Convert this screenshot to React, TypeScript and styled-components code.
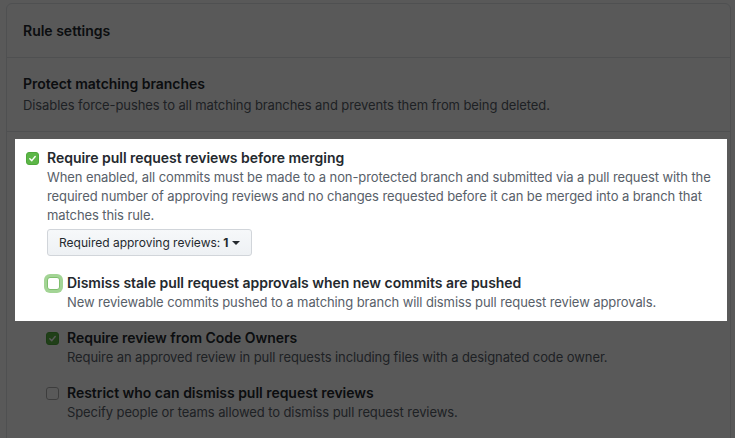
import React from "react";
import styled, { createGlobalStyle } from "styled-components";

const Global = createGlobalStyle`
  html, body { margin: 0; padding: 0; background: #fff; }
  body {
    font-family: Inter, "Noto Sans", "Liberation Sans", sans-serif;
    color: #24292e;
    -webkit-font-smoothing: antialiased;
  }
`;

const Page = styled.div`
  padding: 3px 4px 0 6px;
  height: 438px;
  box-sizing: border-box;
  overflow: hidden;
`;

const Box = styled.div`
  border: 1px solid #e1e4e8;
  border-radius: 6px 6px 0 0;
  min-height: 600px;
`;

const BoxHeader = styled.div`
  padding: 16px 16px;
  border-bottom: 1px solid #e1e4e8;
  font-size: 14px;
  line-height: 21px;
  font-weight: 600;
`;

const Section = styled.div<{ $bordered?: boolean }>`
  padding: 16px 16px;
  border-bottom: ${(p) => (p.$bordered ? "1px solid #e1e4e8" : "none")};
`;

const Title = styled.div`
  font-size: 14px;
  line-height: 20px;
  font-weight: 600;
  color: #24292e;
  white-space: nowrap;
  letter-spacing: -0.03px;
`;

const Note = styled.div`
  font-size: 13px;
  line-height: 19px;
  color: #586069;
  white-space: nowrap;
  letter-spacing: -0.09px;
`;

const NoteSpaced = styled(Note)`
  margin-top: 2px;
`;

const RulesArea = styled.div`
  padding: 7px 3px 0 8px;
`;

const Spotlight = styled.div`
  position: relative;
  z-index: 2;
  background: #fff;
  padding: 9px 11px 9px 11px;
`;

const Option = styled.div<{ $indent?: number; $top?: number }>`
  display: flex;
  align-items: flex-start;
  margin-left: ${(p) => p.$indent ?? 0}px;
  margin-top: ${(p) => p.$top ?? 0}px;
`;

const OptionBody = styled.div`
  display: flex;
  flex-direction: column;
  align-items: flex-start;
`;

const Check = styled.span<{ $checked?: boolean; $focus?: boolean }>`
  flex: none;
  box-sizing: border-box;
  width: 13px;
  height: 13px;
  margin: 4px ${(p) => (p.$focus ? 7 : 8)}px 0 0;
  border-radius: 3px;
  display: flex;
  align-items: center;
  justify-content: center;
  background: ${(p) => (p.$checked ? "#5cb647" : "#fff")};
  border: 1px solid ${(p) => (p.$checked ? "#4fa83b" : p.$focus ? "#7fbf6e" : "#b0b0b0")};
  box-shadow: ${(p) => (p.$focus ? "0 0 0 3px #a3d495" : "none")};
`;

const DropButton = styled.button`
  margin-top: 4px;
  height: 27px;
  box-sizing: border-box;
  padding: 0 11px 0 11px;
  display: inline-flex;
  align-items: center;
  font-family: inherit;
  font-size: 12px;
  color: #24292e;
  background: linear-gradient(#f6f8fa, #eef1f4);
  border: 1px solid #d1d5da;
  border-radius: 3px;
  cursor: pointer;
`;

const Strong = styled.b`
  font-weight: 700;
  margin-left: 3px;
`;

const Caret = styled.span`
  display: inline-block;
  margin-left: 4px;
  width: 0;
  height: 0;
  border-left: 4px solid transparent;
  border-right: 4px solid transparent;
  border-top: 4px solid #24292e;
`;

const Dim = styled.div`
  position: fixed;
  inset: 0;
  background: rgba(0, 0, 0, 0.65);
  z-index: 1;
  pointer-events: none;
`;

const Tick = () => (
  <svg width="9" height="9" viewBox="0 0 10 10" aria-hidden="true">
    <path d="M2 5.3 L4.2 7.4 L8 2.8" fill="none" stroke="#fff" strokeWidth="1.6" strokeLinecap="round" strokeLinejoin="round" />
  </svg>
);

export default function App() {
  return (
    <>
      <Global />
      <Page>
        <Box>
          <BoxHeader>Rule settings</BoxHeader>
          <Section $bordered>
            <Title>Protect matching branches</Title>
            <NoteSpaced>Disables force-pushes to all matching branches and prevents them from being deleted.</NoteSpaced>
          </Section>
          <RulesArea>
            <Spotlight>
              <Option>
                <Check $checked>
                  <Tick />
                </Check>
                <OptionBody>
                  <Title>Require pull request reviews before merging</Title>
                  <Note>
                    When enabled, all commits must be made to a non-protected branch and submitted via a pull request with the
                    <br />
                    required number of approving reviews and no changes requested before it can be merged into a branch that
                    <br />
                    matches this rule.
                  </Note>
                  <DropButton type="button">
                    Required approving reviews:<Strong>1</Strong>
                    <Caret />
                  </DropButton>
                  <Option $top={17}>
                    <Check $focus />
                    <OptionBody>
                      <Title>Dismiss stale pull request approvals when new commits are pushed</Title>
                      <Note>New reviewable commits pushed to a matching branch will dismiss pull request review approvals.</Note>
                    </OptionBody>
                  </Option>
                </OptionBody>
              </Option>
            </Spotlight>
            <Option $indent={31} $top={7}>
              <Check $checked>
                <Tick />
              </Check>
              <OptionBody>
                <Title>Require review from Code Owners</Title>
                <Note>Require an approved review in pull requests including files with a designated code owner.</Note>
              </OptionBody>
            </Option>
            <Option $indent={31} $top={16}>
              <Check />
              <OptionBody>
                <Title>Restrict who can dismiss pull request reviews</Title>
                <Note>Specify people or teams allowed to dismiss pull request reviews.</Note>
              </OptionBody>
            </Option>
          </RulesArea>
        </Box>
      </Page>
      <Dim />
    </>
  );
}
